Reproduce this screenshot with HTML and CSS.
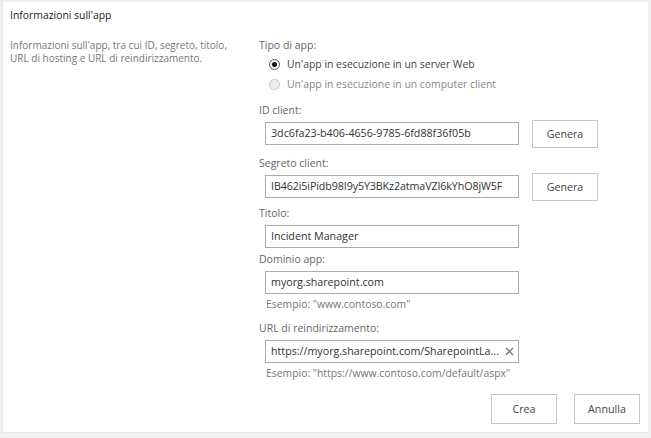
FILE: index.html
```html
<!DOCTYPE html>
<html lang="it">
<head>
<meta charset="utf-8">
<title>Informazioni sull'app</title>
<link rel="stylesheet" href="styles.css">
</head>
<body>
<div class="panel">
  <div class="side">
    <h1 class="title">Informazioni sull'app</h1>
    <p class="desc">Informazioni sull'app, tra cui ID, segreto, titolo, URL di hosting e URL di reindirizzamento.</p>
  </div>
  <div class="form">
    <div class="field field-type">
      <div class="label">Tipo di app:</div>
      <div class="radios">
        <div class="radio-row"><span class="radio checked"></span><span>Un'app in esecuzione in un server Web</span></div>
        <div class="radio-row disabled"><span class="radio"></span><span>Un'app in esecuzione in un computer client</span></div>
      </div>
    </div>
    <div class="field f-id">
      <div class="label">ID client:</div>
      <div class="row">
        <div class="input">3dc6fa23-b406-4656-9785-6fd88f36f05b</div>
        <button class="btn btn-gen">Genera</button>
      </div>
    </div>
    <div class="field f-secret">
      <div class="label">Segreto client:</div>
      <div class="row">
        <div class="input tight">IB462i5iPidb98I9y5Y3BKz2atmaVZI6kYhO8jW5F</div>
        <button class="btn btn-gen">Genera</button>
      </div>
    </div>
    <div class="field f-title">
      <div class="label">Titolo:</div>
      <div class="row">
        <div class="input">Incident Manager</div>
      </div>
    </div>
    <div class="field f-domain">
      <div class="label">Dominio app:</div>
      <div class="row">
        <div class="input">myorg.sharepoint.com</div>
      </div>
      <div class="hint">Esempio: "www.contoso.com"</div>
    </div>
    <div class="field f-url">
      <div class="label">URL di reindirizzamento:</div>
      <div class="row">
        <div class="input input-clear"><span class="val">https://myorg.sharepoint.com/SharepointLa...</span>
          <svg class="clear" width="9" height="9" viewBox="0 0 9 9"><path d="M1 1L8 8M8 1L1 8" stroke="#7a7a7a" stroke-width="1.4" fill="none"/></svg>
        </div>
      </div>
      <div class="hint">Esempio: "https://www.contoso.com/default/aspx"</div>
    </div>
    <div class="actions">
      <button class="btn btn-act">Crea</button>
      <button class="btn btn-act">Annulla</button>
    </div>
  </div>
</div>
</body>
</html>
```

FILE: styles.css
```css
html, body {
  margin: 0;
  padding: 0;
  background: #f1f1f1;
}
body {
  font-family: "Open Sans", "Noto Sans", sans-serif;
  color: #444;
  width: 651px;
  height: 438px;
  overflow: hidden;
}
.panel {
  margin: 2px 3px 0 2px;
  height: 431px;
  background: #fff;
  border-left: 1px solid #e8e8e8;
  border-bottom: 1px solid #e8e8e8;
  box-sizing: border-box;
  display: flex;
  padding: 0 0 0 7px;
}
.side {
  width: 249px;
  flex: none;
}
.title {
  margin: 5px 0 0 0;
  font-size: 10.4px;
  font-weight: normal;
  color: #222;
  line-height: 16px;
}
.desc {
  margin: 16px 0 0 0;
  width: 226px;
  font-size: 10px;
  line-height: 13px;
  color: #777;
}
.form {
  display: flex;
  flex-direction: column;
  width: 390px;
}
.label {
  font-size: 10.5px;
  line-height: 16px;
  color: #666;
}
.field-type {
  margin-top: 35px;
}
.radios {
  margin-top: 3px;
  padding-left: 10px;
  display: flex;
  flex-direction: column;
  gap: 4px;
}
.radio-row {
  display: flex;
  align-items: center;
  gap: 7px;
  font-size: 10.4px;
  line-height: 16px;
  color: #444;
}
.radio-row.disabled {
  color: #888;
}
.radio {
  width: 11px;
  height: 11px;
  border-radius: 50%;
  border: 1px solid #c8c8c8;
  background: #ececec;
  box-sizing: border-box;
  position: relative;
  flex: none;
}
.radio.checked {
  border: 1px solid #555;
  background: #fff;
}
.radio.checked::after {
  content: "";
  position: absolute;
  left: 2px;
  top: 2px;
  width: 5px;
  height: 5px;
  border-radius: 50%;
  background: #111;
}
.field {
  display: flex;
  flex-direction: column;
}
.f-id { margin-top: 10px; }
.f-secret { margin-top: 10px; }
.f-title { margin-top: 7px; }
.f-domain { margin-top: 3px; }
.f-url { margin-top: 9px; }
.row {
  margin-top: 4px;
  margin-left: 6px;
  display: flex;
  align-items: center;
  height: 23px;
}
.input {
  width: 254px;
  height: 23px;
  box-sizing: border-box;
  border: 1px solid #ababab;
  padding: 0 5px;
  font-size: 10.7px;
  line-height: 21px;
  color: #333;
  white-space: nowrap;
  overflow: hidden;
  display: flex;
  align-items: center;
}
.input.tight {
  letter-spacing: -0.1px;
}
.input-clear .val {
  flex: 1;
}
.clear {
  flex: none;
  margin-right: -1px;
}
.btn {
  font-family: inherit;
  background: #fff;
  border: 1px solid #c6c6c6;
  color: #444;
  font-size: 10.7px;
  padding: 0;
  cursor: pointer;
}
.btn-gen {
  margin-left: 13px;
  width: 66px;
  height: 28px;
  flex: none;
}
.hint {
  margin-top: 3px;
  margin-left: 7px;
  font-size: 10.4px;
  line-height: 14px;
  color: #777;
}
.actions {
  margin-top: 14px;
  display: flex;
  justify-content: flex-end;
  gap: 17px;
  padding-right: 8px;
}
.btn-act {
  width: 66px;
  height: 30px;
}
```
